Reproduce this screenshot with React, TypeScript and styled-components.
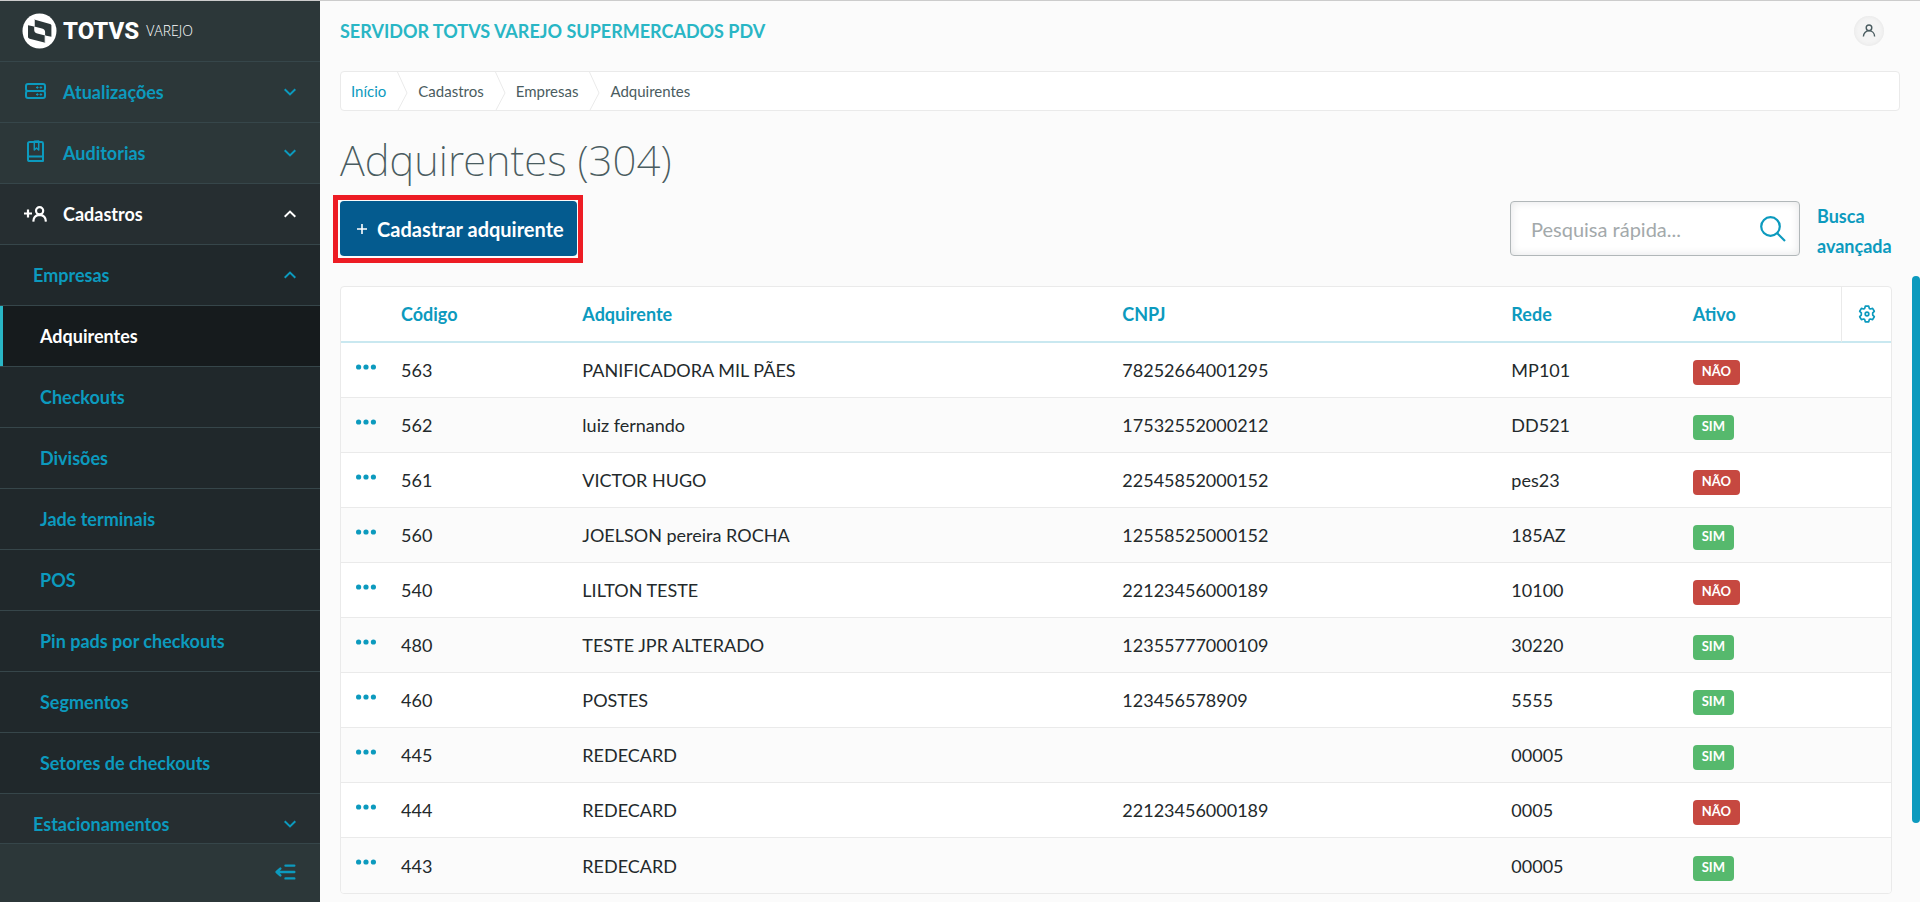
import React from 'react';
import styled, { createGlobalStyle, css } from 'styled-components';

const c = {
  blue: '#0c9abe',
  teal: '#29b6c5',
  ink: '#2c3739',
  page: '#fbfbfb',
  line: '#eaeaea',
  divider: '#36464a',
  text: '#23292b',
  muted: '#4a5c60',
};

const GlobalStyle = createGlobalStyle`
  *, *::before, *::after { box-sizing: border-box; }
  body {
    margin: 0;
    background: ${c.page};
    color: ${c.text};
    font: 400 18px/30px Lato, "Liberation Sans", sans-serif;
  }
  a { color: inherit; text-decoration: none; }
  button { font: inherit; color: inherit; background: none; border: 0; padding: 0; cursor: pointer; }
  svg { display: block; flex: none; }
`;

const Shell = styled.div`
  display: flex;
  height: 100vh;
  border-top: 1px solid #cccccc;
  overflow: hidden;
`;

/* Sidebar */
const Sidebar = styled.aside`
  flex: none;
  width: 320px;
  display: flex;
  flex-direction: column;
  background: ${c.ink};
  color: ${c.blue};
`;

const Brand = styled.div`
  display: flex;
  align-items: center;
  height: 61px;
  padding-left: 22px;
  border-bottom: 1px solid ${c.divider};
  color: #ffffff;
`;

const BrandName = styled.span`
  margin-left: 6px;
  font: 800 24px/30px Roboto, sans-serif;
`;

const BrandProduct = styled.span`
  margin-left: 7px;
  font: 300 14px/30px "Open Sans", sans-serif;
`;

const Nav = styled.nav`
  flex: 1;
  min-height: 0;
  overflow: hidden;
`;

type Tone = 'base' | 'open' | 'deep' | 'active';

const tones: Record<Tone, string> = {
  base: c.ink,
  open: '#262e31',
  deep: '#20282b',
  active: '#161b1d',
};

const rowStyle = css<{ $tone: Tone; $indent: number; $white?: boolean }>`
  display: flex;
  align-items: center;
  width: 100%;
  height: 61px;
  padding: 0 24px 0 ${(p) => p.$indent}px;
  border-bottom: 1px solid ${c.divider};
  background: ${(p) => tones[p.$tone]};
  color: ${(p) => (p.$white ? '#ffffff' : c.blue)};
  font-weight: 700;
  text-align: left;
  ${(p) => p.$tone === 'active' && `box-shadow: inset 3px 0 0 ${c.teal};`}
`;

const NavButton = styled.button`${rowStyle}`;
const NavLink = styled.a`${rowStyle}`;

const NavIcon = styled.span`
  display: flex;
  width: 39px;
`;

const NavText = styled.span`
  flex: 1;
`;

const SidebarFooter = styled.div`
  display: flex;
  align-items: center;
  justify-content: flex-end;
  height: 59px;
  padding: 0 24px 2px 0;
  border-top: 1px solid ${c.divider};
`;

/* Main area */
const Main = styled.main`
  position: relative;
  flex: 1;
  min-width: 0;
  padding: 0 20px;
`;

const TopBar = styled.header`
  display: flex;
  align-items: center;
  justify-content: space-between;
  height: 60px;
  padding-right: 16px;
  color: ${c.teal};
  font-weight: 700;
`;

const Avatar = styled.button`
  display: flex;
  align-items: center;
  justify-content: center;
  width: 30px;
  height: 30px;
  border-radius: 50%;
  background: #f4f4f4;
  box-shadow: inset 0 0 4px #e4e4e4;
  color: ${c.muted};
`;

const Breadcrumb = styled.ol`
  display: flex;
  height: 40px;
  margin: 10px 0 0;
  padding: 0;
  list-style: none;
  background: #ffffff;
  border: 1px solid ${c.line};
  border-radius: 4px;
  color: ${c.muted};
  font-size: 15px;
  line-height: 38px;
`;

const Crumb = styled.li<{ $link?: boolean }>`
  display: flex;
  padding-left: 10px;
  color: ${(p) => (p.$link ? c.blue : 'inherit')};
  svg { margin-left: 11px; }
`;

const Title = styled.h1`
  margin: 19px 0 11px;
  color: ${c.muted};
  font: 200 42px/60px "Noto Sans", sans-serif;
`;

const Toolbar = styled.div`
  display: flex;
  align-items: flex-start;
  margin: 0 8px 25px 0;
`;

const CreateButton = styled.button`
  position: relative;
  display: flex;
  align-items: center;
  gap: 10px;
  height: 55px;
  padding: 0 13px 0 17px;
  margin-right: auto;
  border-radius: 4px;
  background: #045b8f;
  color: #ffffff;
  font-size: 20px;
  font-weight: 700;

  &::before {
    content: "";
    position: absolute;
    inset: -6px -6px -7px -7px;
    border: 5px solid #ed1c24;
  }
`;

const SearchBox = styled.div`
  display: flex;
  align-items: center;
  width: 290px;
  height: 55px;
  padding: 0 13px 0 20px;
  border: 1px solid #b1b7b9;
  border-radius: 4px;
  background: #ffffff;
  box-shadow: inset 0 0 10px #e4e5e6;
  color: ${c.blue};
`;

const SearchInput = styled.input`
  flex: 1;
  min-width: 0;
  padding: 0;
  border: 0;
  outline: 0;
  background: transparent;
  color: ${c.text};
  font: inherit;
  font-size: 20px;
  &::placeholder { color: #a3a9ab; opacity: 1; }
`;

const AdvancedLink = styled.a`
  width: 75px;
  margin-left: 17px;
  color: ${c.blue};
  font-weight: 700;
`;

const TableCard = styled.div`
  margin-right: 8px;
  border: 1px solid ${c.line};
  border-radius: 4px;
  background: #ffffff;
  overflow: hidden;
`;

const Table = styled.table`
  width: 100%;
  table-layout: fixed;
  border-collapse: separate;
  border-spacing: 0;
`;

const Col = styled.col<{ $w?: string }>`
  width: ${(p) => p.$w ?? 'auto'};
`;

const Th = styled.th<{ $tool?: boolean }>`
  height: 56px;
  padding: 0 0 0 16px;
  border-bottom: 2px solid #c9e8f0;
  color: ${c.blue};
  font-weight: 700;
  text-align: left;
`;

const ToolTh = styled(Th)`
  border-left: 1px solid ${c.line};
`;

const Tr = styled.tr`
  &:nth-child(even) { background: ${c.page}; }
  &:not(:last-child) td { border-bottom: 1px solid ${c.line}; }
`;

const Td = styled.td`
  height: 55px;
  padding: 0 0 0 16px;
`;

const MenuCell = styled(Td)`
  padding: 0 0 7px 15px;
  color: ${c.blue};
`;

const BadgeCell = styled(Td)`
  padding-top: 5px;
`;

const CellButton = styled.button`
  display: block;
`;

const Badge = styled.span<{ $on: boolean }>`
  display: block;
  width: fit-content;
  padding: 0 9px 3px;
  border-radius: 4px;
  background: ${(p) => (p.$on ? '#56b96d' : '#c64840')};
  color: #ffffff;
  font-size: 13px;
  line-height: 22px;
  font-weight: 700;
`;

const ScrollThumb = styled.div`
  position: absolute;
  top: 275px;
  bottom: 79px;
  right: 0;
  width: 8px;
  border-radius: 4px;
  background: ${c.blue};
`;

/* Icons */
const Chevron = ({ up }: { up?: boolean }) => (
  <svg width="12" height="8" viewBox="0 0 12 8" fill="none" stroke="currentColor" strokeWidth="2">
    <path d={up ? 'M.7 6.8 6 1.6l5.3 5.2' : 'M.7 1.2 6 6.4l5.3-5.2'} />
  </svg>
);

const BrandMark = () => (
  <svg width="35" height="36" viewBox="0 0 35 36">
    <ellipse cx="17.5" cy="18" rx="17" ry="17.6" fill="#fff" />
    <path d="M12.2 6.6 28 10.9c.9.3 1.4.8 1.4 1.7v11.1l-6.2-1.2.1 7.2-15.7-4c-.9-.3-1.6-.9-1.6-1.9V12.3l6.2 1.2z" fill={c.ink} />
    <path d="M12.2 13.5 20 15.4c2 .6 3.1 1.6 3.1 3.4v3.7l-7.800-2c-2-.6-3.100-1.700-3.100-3.500z" fill="#fff" />
    <path d="M12.2 13.5V6.6M23.2 22.5v7.2" stroke="#fff" strokeWidth="1" />
  </svg>
);

const ServerIcon = () => (
  <svg width="22" height="18" viewBox="0 0 22 18" fill="none" stroke="currentColor" strokeWidth="2">
    <rect x="2" y="1" width="19" height="7" rx="2" />
    <rect x="2" y="8" width="19" height="7" rx="2" />
    <path d="M12 4.500h2.600M13.300 3.200v2.600M15.600 4.500h2.600M16.900 3.200v2.600M12 11.500h2.600M13.300 10.200v2.600M15.600 11.500h2.600M16.900 10.200v2.600" strokeWidth="1" />
  </svg>
);

const BookIcon = () => (
  <svg width="22" height="26" viewBox="0 0 22 26" fill="none" stroke="currentColor" strokeWidth="2" strokeLinejoin="round">
    <path d="M5.600 2h12q1.400 0 1.400 1.400V21H5.600Q4 21 4 19.400V3.600Q4 2 5.600 2zM4 16.600h15" />
    <path d="M10.300 1.200V10l2.200-2 2.200 2V1z" strokeWidth="1.500" />
  </svg>
);

const AddPersonIcon = () => (
  <svg width="24" height="16" viewBox="0 0 24 16" fill="none" stroke="currentColor" strokeWidth="2.200">
    <path d="M0 7.500h8M4 3.500v8" />
    <circle cx="15.600" cy="4.800" r="3.600" />
    <path d="M9.300 15.600c.1-4 2.200-6.600 6.300-6.800 4.100.2 6.200 2.800 6.300 6.800" />
  </svg>
);

const PersonIcon = () => (
  <svg width="14" height="14" viewBox="0 0 20 20" fill="none" stroke="currentColor" strokeWidth="2">
    <circle cx="10" cy="5.500" r="4" />
    <path d="M2 18c0-5 3.500-8.300 8-8.300s8 3.300 8 8.300" />
  </svg>
);

const CollapseIcon = () => (
  <svg width="21" height="16" viewBox="0 0 21 16" fill="none" stroke="currentColor" strokeWidth="2.400" strokeLinecap="round" strokeLinejoin="round">
    <path d="M10.500 1.600h8.800M2 8h17.300M10.500 14.400h8.800M5.300 4.600 1.600 8l3.700 3.400" />
  </svg>
);

const SearchIcon = () => (
  <svg width="26" height="26" viewBox="0 0 26 26" fill="none" stroke="currentColor" strokeWidth="2.200">
    <circle cx="10.500" cy="10.500" r="9.300" />
    <path d="M17 17l8 8" />
  </svg>
);

const GearIcon = () => (
  <svg width="18" height="18" viewBox="0 0 18 18" fill="none" stroke="currentColor" strokeWidth="1.700" strokeLinejoin="round">
    <path d="M7.300 1.200h3.400l.6 2.200 1.100.6 2.200-.6 1.700 2.900-1.600 1.600v2.200l1.600 1.600-1.700 2.900-2.200-.6-1.100.6-.6 2.200H7.300l-.6-2.200-1.100-.6-2.200.6-1.700-2.900 1.600-1.600V7.900L1.700 6.300l1.700-2.900 2.200.6 1.100-.6z" />
    <circle cx="9" cy="9" r="1.800" />
  </svg>
);

const DotsIcon = () => (
  <svg width="20" height="6" viewBox="0 0 20 6" fill="currentColor">
    <circle cx="2.600" cy="3" r="2.600" />
    <circle cx="10" cy="3" r="2.600" />
    <circle cx="17.400" cy="3" r="2.600" />
  </svg>
);

const PlusIcon = () => (
  <svg width="10" height="10" viewBox="0 0 10 10" stroke="currentColor" strokeWidth="1.600">
    <path d="M0 5h10M5 0v10" />
  </svg>
);

const CrumbArrow = () => (
  <svg width="11" height="40" viewBox="0 0 11 40" fill="none" stroke={c.line} strokeWidth="1">
    <path d="M.5 0l9.500 21L.5 39" />
  </svg>
);

const companyLinks = [
  'Adquirentes',
  'Checkouts',
  'Divisões',
  'Jade terminais',
  'POS',
  'Pin pads por checkouts',
  'Segmentos',
  'Setores de checkouts',
];

const crumbs = ['Início', 'Cadastros', 'Empresas', 'Adquirentes'];

const rows: [string, string, string, string, boolean][] = [
  ['563', 'PANIFICADORA MIL PÃES', '78252664001295', 'MP101', false],
  ['562', 'luiz fernando', '17532552000212', 'DD521', true],
  ['561', 'VICTOR HUGO', '22545852000152', 'pes23', false],
  ['560', 'JOELSON pereira ROCHA', '12558525000152', '185AZ', true],
  ['540', 'LILTON TESTE', '22123456000189', '10100', false],
  ['480', 'TESTE JPR ALTERADO', '12355777000109', '30220', true],
  ['460', 'POSTES', '123456578909', '5555', true],
  ['445', 'REDECARD', '', '00005', true],
  ['444', 'REDECARD', '22123456000189', '0005', false],
  ['443', 'REDECARD', '', '00005', true],
];

export default function App() {
  return (
    <Shell>
      <GlobalStyle />
      <Sidebar>
        <Brand>
          <BrandMark />
          <BrandName>TOTVS</BrandName>
          <BrandProduct>VAREJO</BrandProduct>
        </Brand>
        <Nav>
          <NavButton $tone="base" $indent={24}>
            <NavIcon><ServerIcon /></NavIcon>
            <NavText>Atualizações</NavText>
            <Chevron />
          </NavButton>
          <NavButton $tone="base" $indent={24}>
            <NavIcon><BookIcon /></NavIcon>
            <NavText>Auditorias</NavText>
            <Chevron />
          </NavButton>
          <NavButton $tone="open" $indent={24} $white aria-expanded="true">
            <NavIcon><AddPersonIcon /></NavIcon>
            <NavText>Cadastros</NavText>
            <Chevron up />
          </NavButton>
          <NavButton $tone="deep" $indent={33} aria-expanded="true">
            <NavText>Empresas</NavText>
            <Chevron up />
          </NavButton>
          {companyLinks.map((name, i) => (
            <NavLink key={name} href="#" $tone={i === 0 ? 'active' : 'deep'} $indent={40} $white={i === 0}>
              {name}
            </NavLink>
          ))}
          <NavButton $tone="open" $indent={33}>
            <NavText>Estacionamentos</NavText>
            <Chevron />
          </NavButton>
        </Nav>
        <SidebarFooter>
          <button aria-label="Recolher menu"><CollapseIcon /></button>
        </SidebarFooter>
      </Sidebar>

      <Main>
        <TopBar>
          <span>SERVIDOR TOTVS VAREJO SUPERMERCADOS PDV</span>
          <Avatar aria-label="Perfil"><PersonIcon /></Avatar>
        </TopBar>
        <Breadcrumb>
          {crumbs.map((name, i) => (
            <Crumb key={name} $link={i === 0}>
              {i === 0 ? <a href="#">{name}</a> : name}
              {i < crumbs.length - 1 && <CrumbArrow />}
            </Crumb>
          ))}
        </Breadcrumb>
        <Title>Adquirentes (304)</Title>
        <Toolbar>
          <CreateButton>
            <PlusIcon />
            Cadastrar adquirente
          </CreateButton>
          <SearchBox>
            <SearchInput type="text" aria-label="Pesquisa rápida" placeholder="Pesquisa rápida..." />
            <button aria-label="Pesquisar"><SearchIcon /></button>
          </SearchBox>
          <AdvancedLink href="#">Busca avançada</AdvancedLink>
        </Toolbar>
        <TableCard>
          <Table>
            <colgroup>
              <Col $w="44px" />
              <Col $w="11.7%" />
              <Col />
              <Col $w="25.1%" />
              <Col $w="11.7%" />
              <Col $w="10.6%" />
              <Col $w="50px" />
            </colgroup>
            <thead>
              <tr>
                <Th />
                <Th>Código</Th>
                <Th>Adquirente</Th>
                <Th>CNPJ</Th>
                <Th>Rede</Th>
                <Th>Ativo</Th>
                <ToolTh><CellButton aria-label="Configurar colunas"><GearIcon /></CellButton></ToolTh>
              </tr>
            </thead>
            <tbody>
              {rows.map(([code, name, cnpj, network, active]) => (
                <Tr key={code}>
                  <MenuCell><CellButton aria-label={`Ações de ${code}`}><DotsIcon /></CellButton></MenuCell>
                  <Td>{code}</Td>
                  <Td>{name}</Td>
                  <Td>{cnpj}</Td>
                  <Td>{network}</Td>
                  <BadgeCell><Badge $on={active}>{active ? 'SIM' : 'NÃO'}</Badge></BadgeCell>
                  <Td />
                </Tr>
              ))}
            </tbody>
          </Table>
        </TableCard>
        <ScrollThumb />
      </Main>
    </Shell>
  );
}
